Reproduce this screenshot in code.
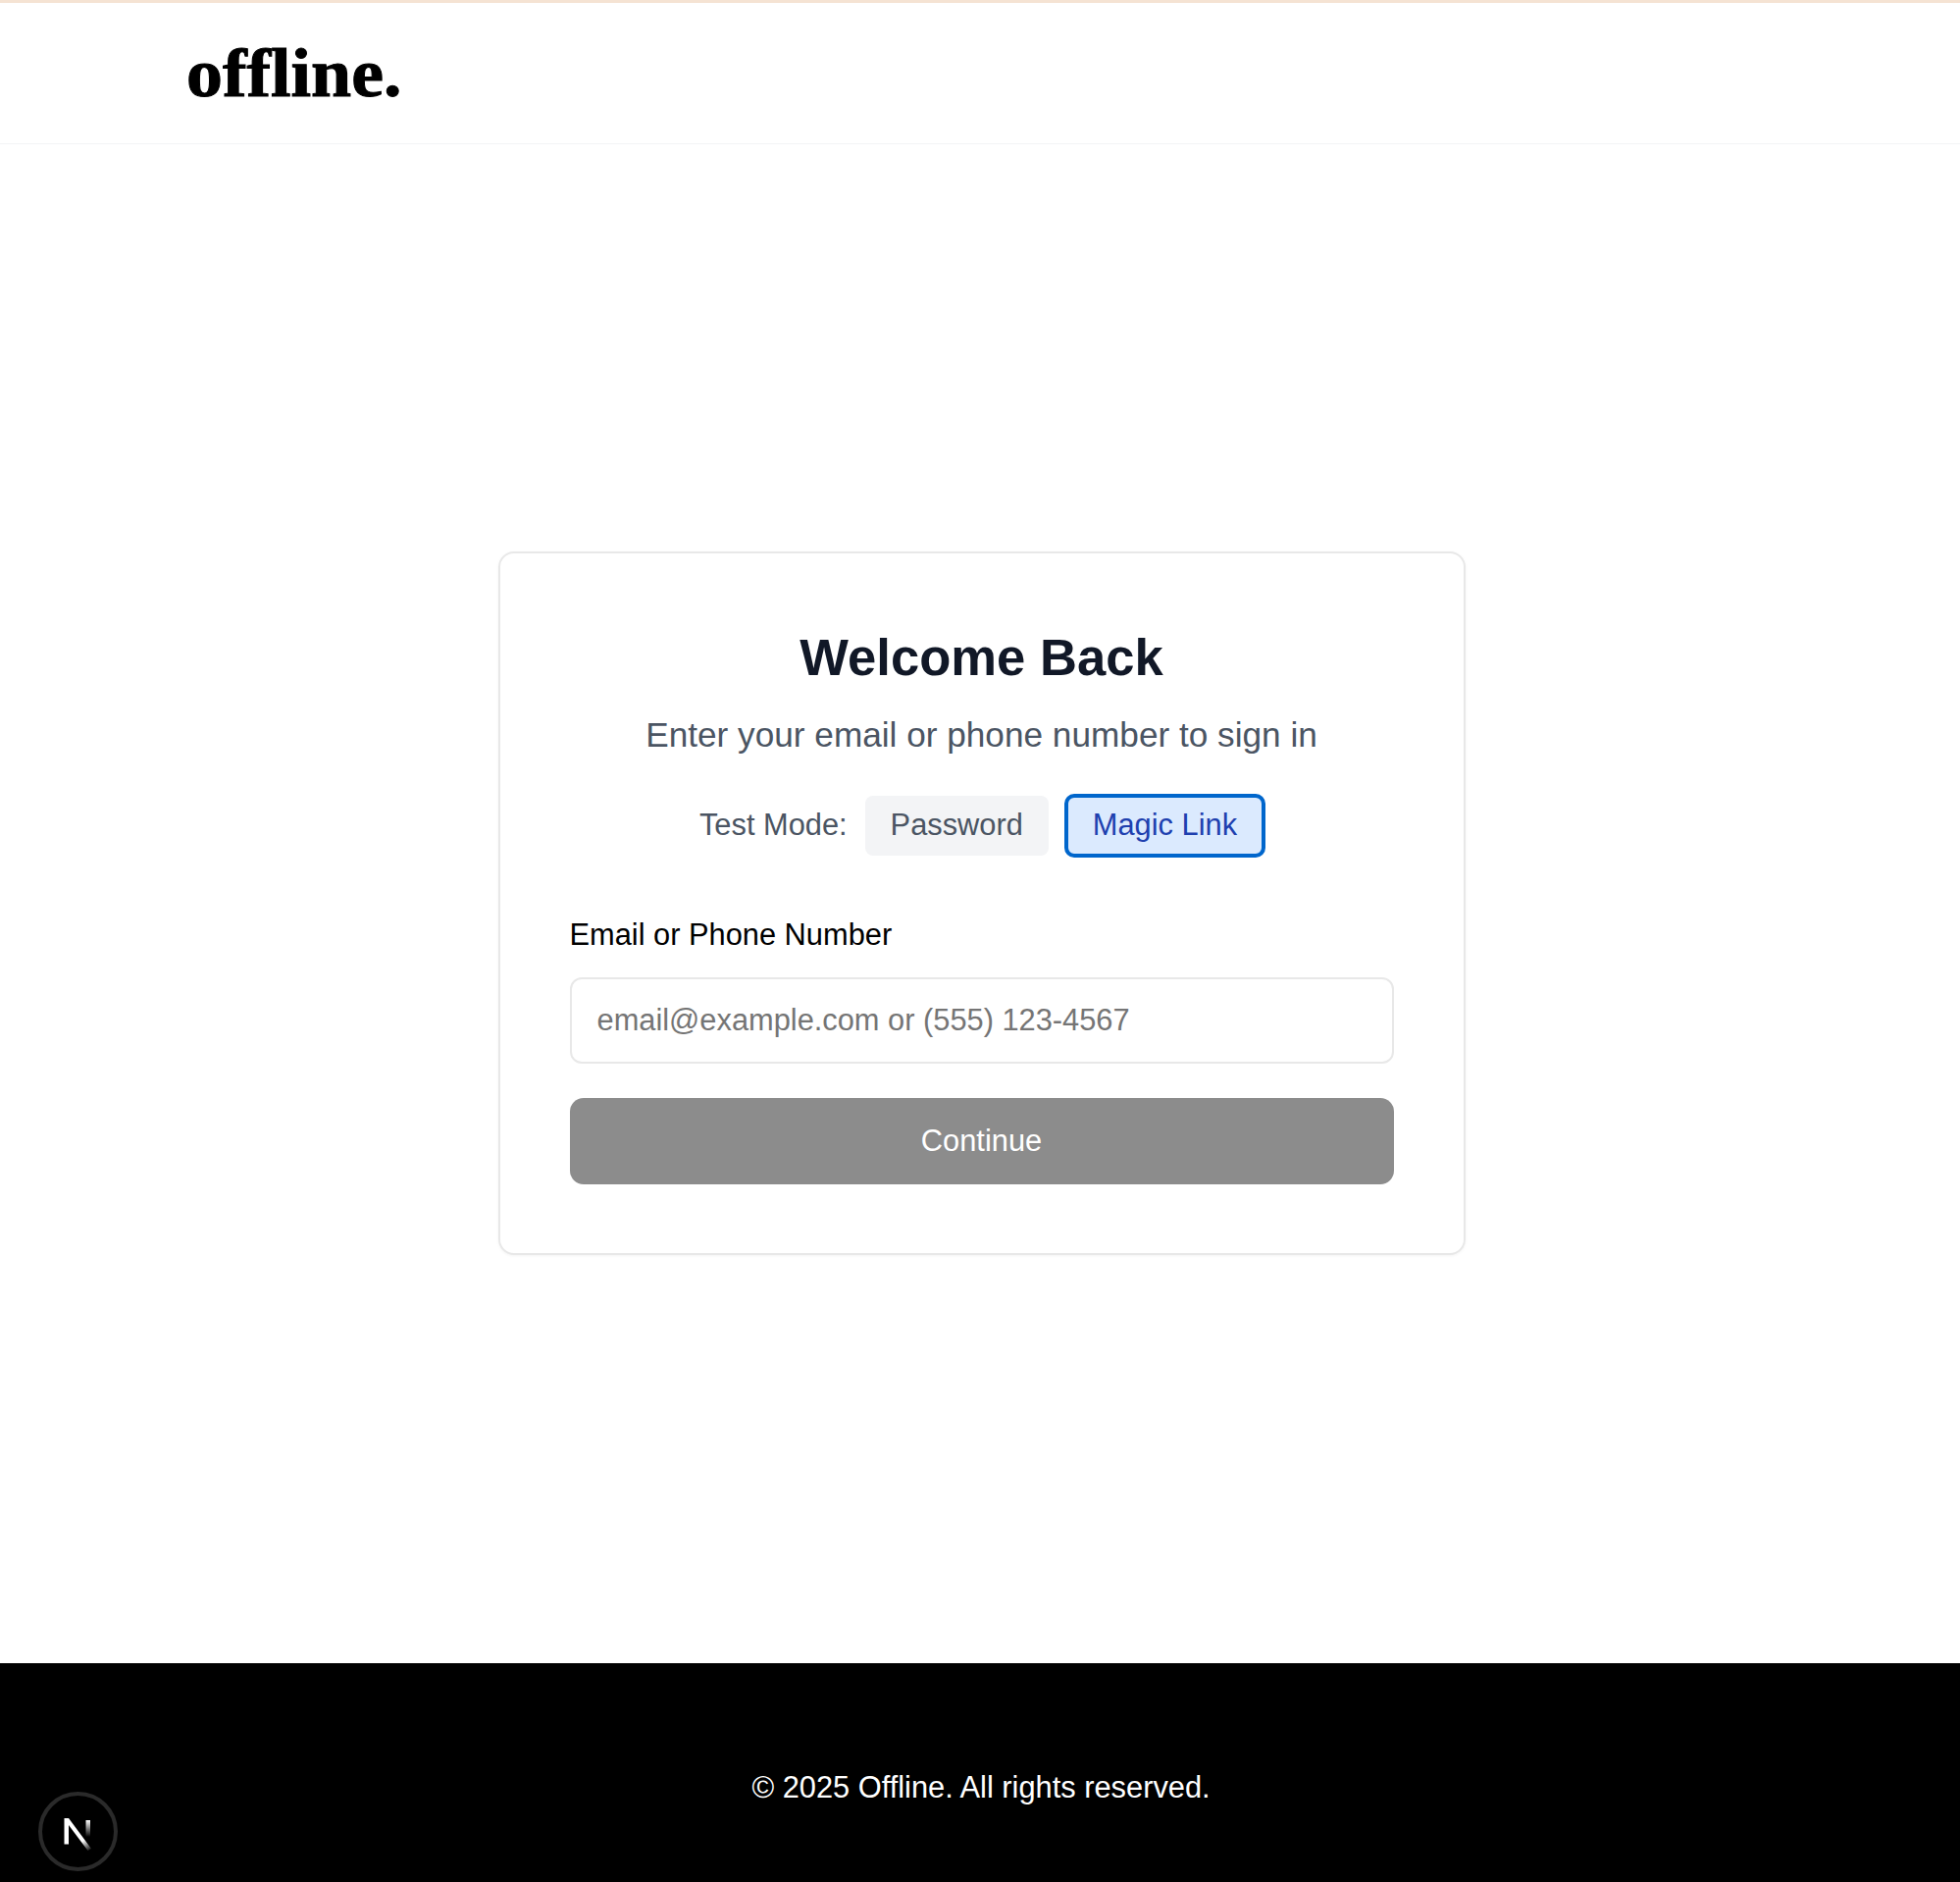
<script>
	let mode = 'magic'
</script>

<div class="page">
	<div class="topline"></div>
	<header class="header">
		<span class="logo">offline.</span>
	</header>

	<main class="main">
		<section class="card">
			<h1>Welcome Back</h1>
			<p class="sub">Enter your email or phone number to sign in</p>
			<div class="modes">
				<span class="mode-label">Test Mode:</span>
				<button class="mode {mode === 'password' ? 'active' : ''}" onclick={() => (mode = 'password')}>Password</button>
				<button class="mode {mode === 'magic' ? 'active' : ''}" onclick={() => (mode = 'magic')}>Magic Link</button>
			</div>
			<label class="label" for="contact">Email or Phone Number</label>
			<input id="contact" class="input" type="text" placeholder="email@example.com or (555) 123-4567" />
			<button class="submit">Continue</button>
		</section>
	</main>

	<footer class="footer">
		<p>© 2025 Offline. All rights reserved.</p>
	</footer>

	<div class="next-badge">
		<svg width="40" height="40" viewBox="0 0 40 40" fill="none">
			<defs>
				<linearGradient id="diag" x1="14" y1="12" x2="33" y2="39" gradientUnits="userSpaceOnUse">
					<stop offset="0.6" stop-color="#fff" />
					<stop offset="1" stop-color="#fff" stop-opacity="0" />
				</linearGradient>
				<linearGradient id="right" x1="30" y1="8" x2="30" y2="25" gradientUnits="userSpaceOnUse">
					<stop offset="0" stop-color="#fff" />
					<stop offset="1" stop-color="#fff" stop-opacity="0" />
				</linearGradient>
			</defs>
			<path d="M5.5 32.5V6h4.5L33 37l-3.5 2L10 13v19.5z" fill="url(#diag)" />
			<rect x="27.5" y="8" width="4.5" height="17" fill="url(#right)" />
		</svg>
	</div>
</div>

<style>
	:global(body) {
		margin: 0;
		background: #fff;
	}

	.page {
		position: relative;
		display: flex;
		flex-direction: column;
		min-height: 1918px;
		font-family: 'Liberation Sans', Arial, sans-serif;
	}

	.topline {
		height: 3px;
		background: #f5e3d3;
	}

	.header {
		display: flex;
		align-items: center;
		height: 143px;
		padding-left: 190px;
		border-bottom: 1px solid #f3f4f6;
	}

	.logo {
		padding-top: 1px;
		font-family: 'Liberation Serif', serif;
		font-size: 69px;
		font-weight: 700;
		line-height: 1;
		color: #000;
		-webkit-text-stroke: 1px #000;
		transform: scaleX(1.07);
		transform-origin: left center;
	}

	.main {
		flex: 1;
		display: flex;
		align-items: center;
		justify-content: center;
		padding: 0 0 1px 3px;
	}

	.card {
		display: flex;
		flex-direction: column;
		box-sizing: border-box;
		width: 986px;
		height: 717px;
		padding: 76px 71px 0;
		background: #fff;
		border: 2px solid #e8e8e8;
		border-radius: 16px;
		box-shadow: 0 1px 3px rgba(0, 0, 0, 0.05);
	}

	h1 {
		margin: 0;
		font-size: 52.6px;
		line-height: 60px;
		font-weight: 700;
		text-align: center;
		color: #111827;
	}

	.sub {
		margin: 29px 0 0;
		font-size: 35.2px;
		line-height: 40px;
		text-align: center;
		color: #4b5563;
	}

	.modes {
		display: flex;
		align-items: center;
		justify-content: center;
		gap: 16px;
		margin: 40px 0 0 2px;
		height: 64px;
	}

	.mode-label {
		margin-right: 2px;
		font-size: 30.8px;
		color: #4b5563;
	}

	.mode {
		box-sizing: border-box;
		height: 61px;
		padding: 0 26px;
		font-family: inherit;
		font-size: 30.8px;
		color: #4b5563;
		background: #f3f4f6;
		border: none;
		border-radius: 8px;
	}

	.mode.active {
		height: 65px;
		padding: 0 25px;
		color: #1e40af;
		background: #dbeafe;
		border: 4px solid #0066cc;
		border-radius: 10px;
	}

	.label {
		margin-top: 62px;
		font-size: 30.8px;
		line-height: 36px;
		color: #000;
	}

	.input {
		box-sizing: border-box;
		width: 100%;
		height: 88px;
		margin-top: 25px;
		padding: 0 26px;
		font-family: inherit;
		font-size: 30.8px;
		background: #fff;
		border: 2px solid #e8e8e8;
		border-radius: 12px;
		outline: none;
	}

	.input::placeholder {
		color: #757575;
		opacity: 1;
	}

	.submit {
		width: 100%;
		height: 88px;
		margin-top: 35px;
		font-family: inherit;
		font-size: 30.8px;
		color: #fff;
		background: #8c8c8c;
		border: none;
		border-radius: 14px;
	}

	.footer {
		display: flex;
		justify-content: center;
		height: 223px;
		padding-left: 2px;
		background: #000;
	}

	.footer p {
		margin: 109px 0 0;
		font-size: 30.8px;
		line-height: 36px;
		color: #fff;
	}

	.next-badge {
		position: absolute;
		left: 39px;
		bottom: 11px;
		display: flex;
		align-items: center;
		justify-content: center;
		box-sizing: border-box;
		width: 81px;
		height: 81px;
		background: #000;
		border: 4px solid #2a2a2a;
		border-radius: 50%;
	}
</style>
